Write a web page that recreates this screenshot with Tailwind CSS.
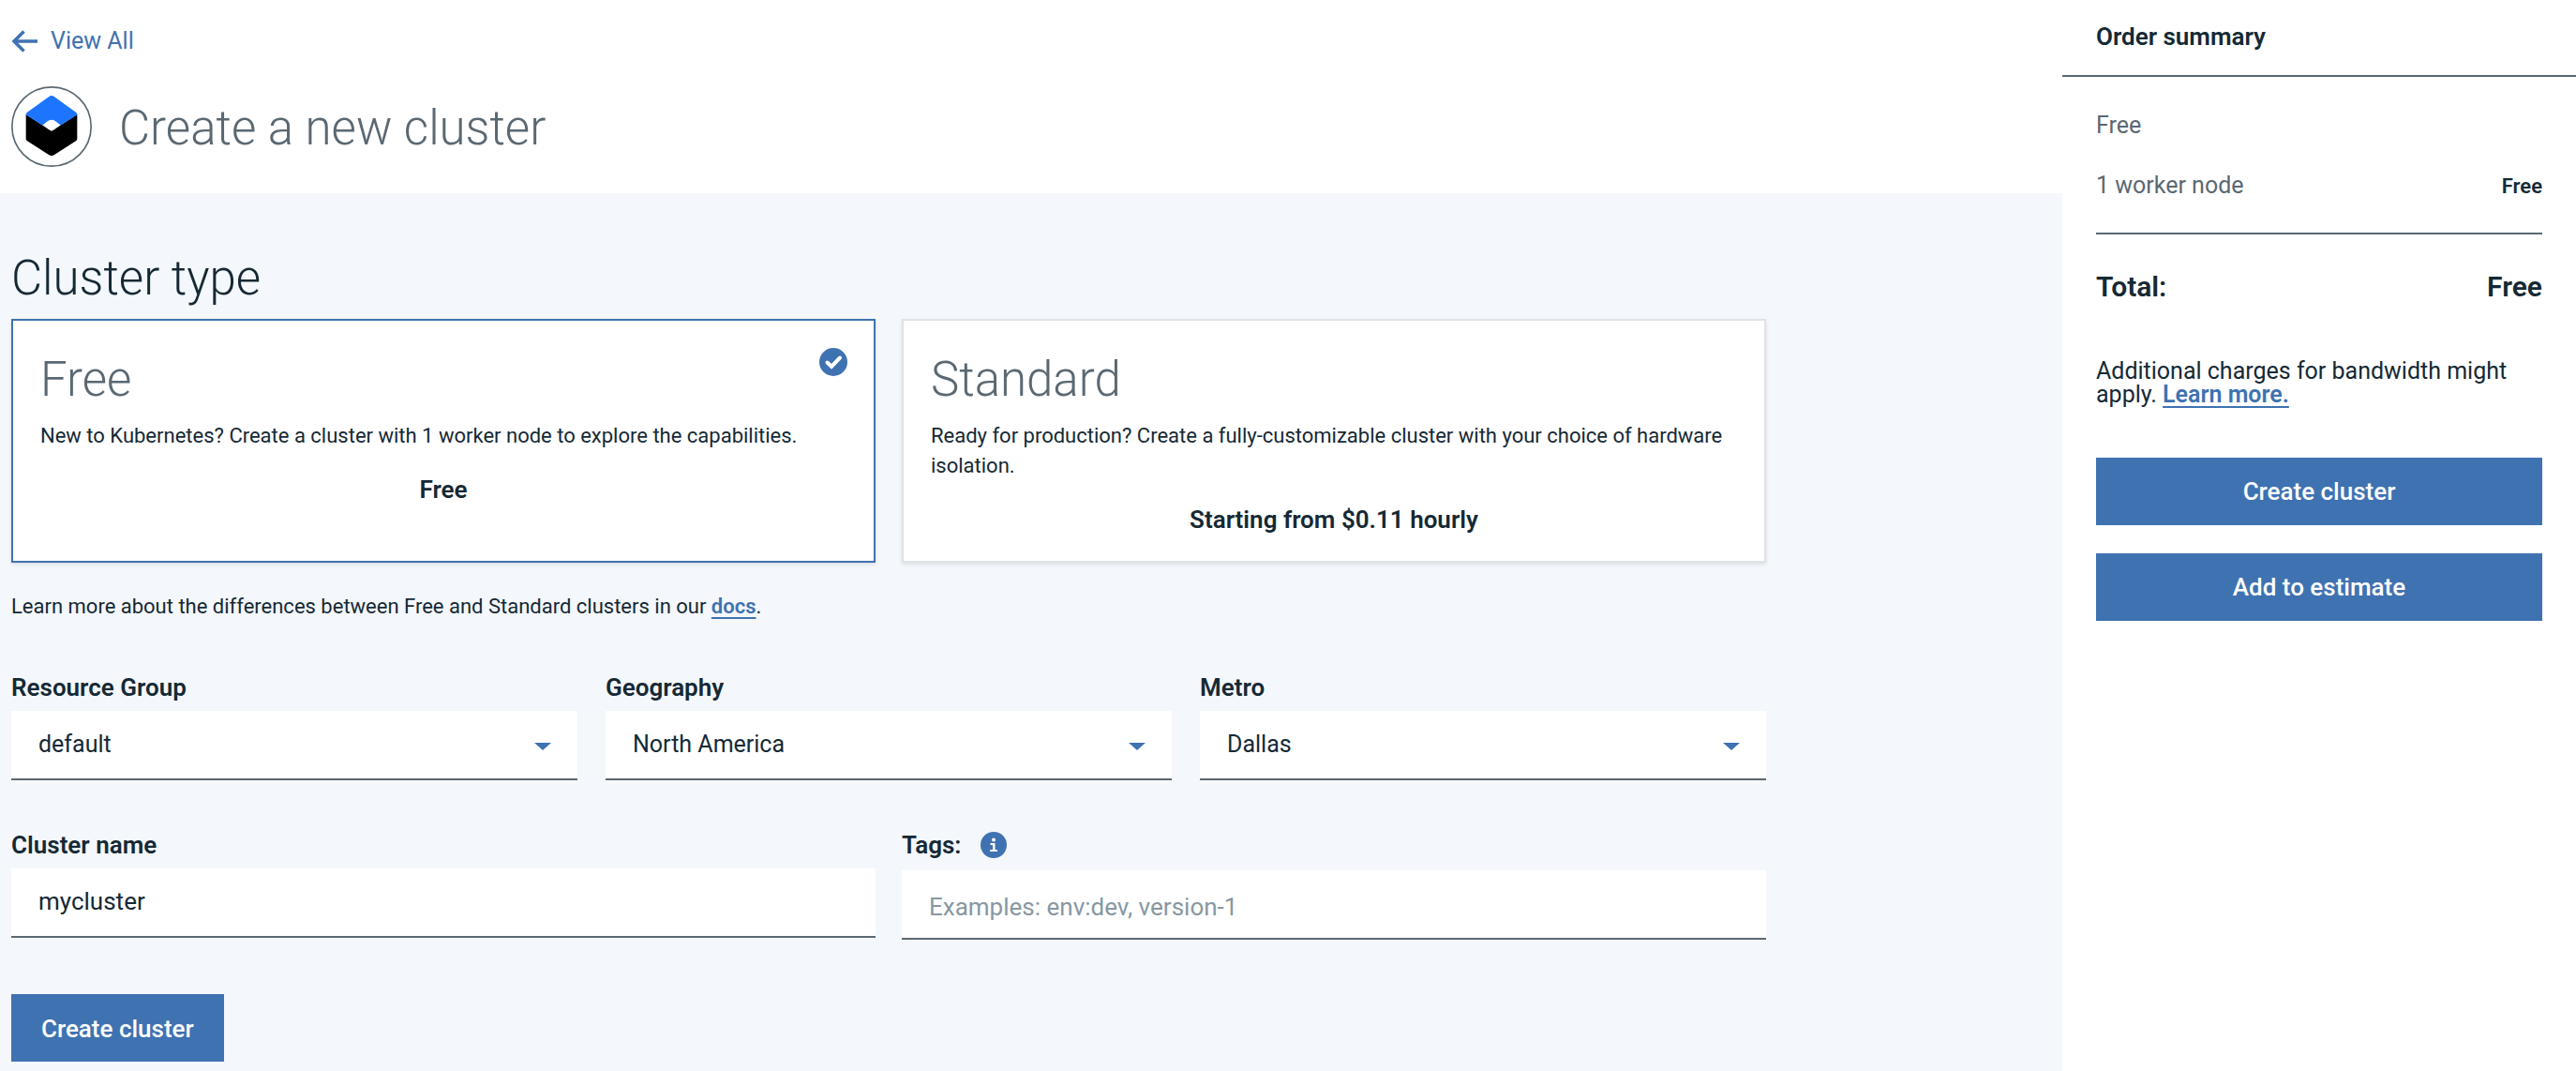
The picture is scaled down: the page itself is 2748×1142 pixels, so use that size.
<!DOCTYPE html>
<html lang="en">
<head>
<meta charset="utf-8">
<title>Create a new cluster</title>
<script src="https://cdn.jsdelivr.net/npm/@tailwindcss/browser@4"></script>
</head>
<body class="flex min-h-screen bg-white font-['Roboto',sans-serif] text-[25px] leading-8 text-[#152935]">
  <main class="flex min-w-0 flex-1 flex-col">
    <header class="px-3 pt-7 pb-7">
      <a href="#" class="inline-flex items-center gap-3.5 align-top text-[#3f72b1]">
        <svg class="h-6 w-7" viewBox="0 0 28 24" fill="none" stroke="currentColor" stroke-width="3.500" aria-hidden="true"><path d="M28 12H3M13.500 1.500L3 12L13.500 22.500"/></svg>
        View All
      </a>
      <div class="mt-8 flex items-center gap-[29px]">
        <svg class="size-[86px] shrink-0" viewBox="0 0 258 258" aria-hidden="true">
          <circle cx="129" cy="129" r="126.500" fill="#fff" stroke="#5a6872" stroke-width="5"/>
          <path d="M47 90L129 143L211 90V168Q211 172 207 175L137 220Q129 225 121 220L51 175Q47 172 47 168Z" fill="#000"/>
          <path d="M51 83L121 33Q129 27 137 33L207 83Q215 89 207 94L157 125L141 112Q129 103 117 112L101 125L51 94Q43 89 51 83Z" fill="#1d74ff"/>
          <path d="M101 124L117 112Q129 104 141 112L157 124L138 138Q129 145 120 138Z" fill="#fff"/>
        </svg>
        <h1 class="pt-1 text-[51px] leading-[60px] font-light text-[#5a6872]">Create a new cluster</h1>
      </div>
    </header>

    <form class="flex-1 bg-[#f4f7fb] px-3 pt-[55px] pb-2.5">
      <div class="max-w-[1872px]">
        <h2 class="mb-[7px] text-[51px] leading-[72px] font-light">Cluster type</h2>

        <div class="grid grid-cols-2 gap-7">
          <section class="relative border-2 border-[#3f72b1] bg-white px-[29px] pt-[33px] pb-7 shadow-[0_2px_4px_rgba(0,0,0,0.1)]">
            <h3 class="text-[51px] leading-[60px] font-light text-[#5a6872]">Free</h3>
            <p class="mt-3.5 text-[22px]">New to Kubernetes? Create a cluster with 1 worker node to explore the capabilities.</p>
            <p class="mt-[25px] text-center text-[26px] font-semibold">Free</p>
            <svg class="absolute top-[29px] right-7 size-[30px]" viewBox="0 0 30 30" role="img" aria-label="Selected"><circle cx="15" cy="15" r="15" fill="#3f72b1"/><path d="M8.500 15.500L13 20L22 10.500" fill="none" stroke="#fff" stroke-width="4" stroke-linecap="round"/></svg>
          </section>
          <section class="border-2 border-[#dfe3e6] bg-white px-[29px] pt-[33px] pb-7 shadow-[0_2px_4px_rgba(0,0,0,0.1)]">
            <h3 class="text-[51px] leading-[60px] font-light text-[#5a6872]">Standard</h3>
            <p class="mt-3.5 text-[22px]">Ready for production? Create a fully-customizable cluster with your choice of hardware isolation.</p>
            <p class="mt-[25px] text-center text-[26px] font-semibold">Starting from $0.11 hourly</p>
          </section>
        </div>

        <p class="mt-[31px] text-[22px]">Learn more about the differences between Free and Standard clusters in our <a href="#" class="font-semibold text-[#3f72b1] underline decoration-2 underline-offset-4">docs</a>.</p>

        <div class="mt-[54px] grid grid-cols-3 gap-[30px]">
          <div class="flex flex-col gap-[9px]">
            <label for="group" class="text-[26px] font-semibold">Resource Group</label>
            <div class="relative">
              <select id="group" class="block h-[74px] w-full appearance-none rounded-none border-b-2 border-[#5a6872] bg-white px-[29px]"><option>default</option></select>
              <svg class="pointer-events-none absolute top-[34px] right-7 h-2 w-[18px]" viewBox="0 0 18 8" fill="#3f72b1" aria-hidden="true"><path d="M0 0H18L9 8Z"/></svg>
            </div>
          </div>
          <div class="flex flex-col gap-[9px]">
            <label for="geo" class="text-[26px] font-semibold">Geography</label>
            <div class="relative">
              <select id="geo" class="block h-[74px] w-full appearance-none rounded-none border-b-2 border-[#5a6872] bg-white px-[29px]"><option>North America</option></select>
              <svg class="pointer-events-none absolute top-[34px] right-7 h-2 w-[18px]" viewBox="0 0 18 8" fill="#3f72b1" aria-hidden="true"><path d="M0 0H18L9 8Z"/></svg>
            </div>
          </div>
          <div class="flex flex-col gap-[9px]">
            <label for="metro" class="text-[26px] font-semibold">Metro</label>
            <div class="relative">
              <select id="metro" class="block h-[74px] w-full appearance-none rounded-none border-b-2 border-[#5a6872] bg-white px-[29px]"><option>Dallas</option></select>
              <svg class="pointer-events-none absolute top-[34px] right-7 h-2 w-[18px]" viewBox="0 0 18 8" fill="#3f72b1" aria-hidden="true"><path d="M0 0H18L9 8Z"/></svg>
            </div>
          </div>
        </div>

        <div class="mt-[53px] grid grid-cols-2 gap-7">
          <div class="flex flex-col gap-[9px]">
            <label for="name" class="text-[26px] font-semibold">Cluster name</label>
            <input id="name" type="text" value="mycluster" class="h-[74px] w-full border-b-2 border-[#5a6872] bg-white px-[29px] pb-0.5 text-[26px]">
          </div>
          <div class="flex flex-col gap-[11px]">
            <div class="flex items-center gap-[21px]">
              <label for="tags" class="text-[26px] font-semibold">Tags:</label>
              <svg class="size-7" viewBox="0 0 28 28" role="img" aria-label="Information"><circle cx="14" cy="14" r="14" fill="#3f72b1"/><circle cx="14" cy="8.500" r="2" fill="#fff"/><path d="M10.500 12H15.500V19H18V21H10V19H13V14H10.500Z" fill="#fff"/></svg>
            </div>
            <input id="tags" type="text" placeholder="Examples: env:dev, version-1" class="h-[74px] w-full border-b-2 border-[#5a6872] bg-white px-[29px] pt-1.5 text-[26px] placeholder:text-[#8897a2]">
          </div>
        </div>

        <button type="submit" class="mt-[58px] block h-[72px] bg-[#3f72b1] px-8 pt-0.5 text-[26px] font-medium text-white">Create cluster</button>
      </div>
    </form>
  </main>

  <aside class="w-[548px] shrink-0">
    <h2 class="border-b-2 border-[#5a6872] px-9 pt-[23px] pb-[25px] text-[26px] font-semibold">Order summary</h2>
    <div class="px-9 pt-9">
      <p class="text-[#5a6872]">Free</p>
      <dl>
        <div class="mt-8 flex items-baseline justify-between border-b-2 border-[#5a6872] pb-[33px]">
          <dt class="text-[#5a6872]">1 worker node</dt>
          <dd class="text-[22px] font-semibold">Free</dd>
        </div>
        <div class="flex justify-between pt-9 text-[30px] leading-10 font-semibold">
          <dt>Total:</dt>
          <dd>Free</dd>
        </div>
      </dl>
      <p class="mt-[57px] leading-[25px]">Additional charges for bandwidth might apply. <a href="#" class="font-semibold text-[#3f72b1] underline decoration-2 underline-offset-4">Learn more.</a></p>
      <div class="mt-[55px] flex flex-col gap-[30px]">
        <button type="button" class="h-[72px] bg-[#3f72b1] text-[26px] font-medium text-white">Create cluster</button>
        <button type="button" class="h-[72px] bg-[#3f72b1] text-[26px] font-medium text-white">Add to estimate</button>
      </div>
    </div>
  </aside>
</body>
</html>
